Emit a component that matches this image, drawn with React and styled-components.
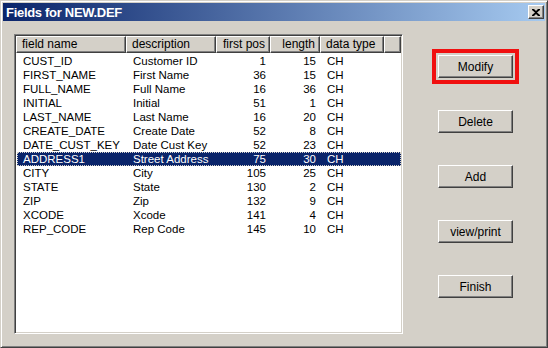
import React from 'react';
import styled, { createGlobalStyle } from 'styled-components';

const Global = createGlobalStyle`
  html, body { margin: 0; padding: 0; background: #d4d0c8; }
  body { font-family: "Liberation Sans", Arial, sans-serif; font-size: 11px; }
`;

const Window = styled.div`
  width: 548px;
  height: 348px;
  box-sizing: border-box;
  background: #d4d0c8;
  border-top: 1px solid #d4d0c8;
  border-left: 1px solid #d4d0c8;
  border-right: 1px solid #404040;
  border-bottom: 1px solid #404040;
  box-shadow: inset 1px 1px 0 #fff, inset -1px -1px 0 #808080;
  padding: 2px;
  display: flex;
  flex-direction: column;
`;

const TitleBar = styled.div`
  height: 18px;
  display: flex;
  align-items: center;
  justify-content: space-between;
  padding: 0 1px 0 3px;
  background: linear-gradient(to right, #0a246a, #a6caf0);
`;

const Title = styled.span`
  color: #fff;
  font-weight: bold;
  font-size: 13px;
  letter-spacing: -0.3px;
`;

const CloseBtn = styled.div`
  width: 16px;
  height: 14px;
  box-sizing: border-box;
  background: #d4d0c8;
  border-top: 1px solid #fff;
  border-left: 1px solid #fff;
  border-right: 1px solid #404040;
  border-bottom: 1px solid #404040;
  box-shadow: inset -1px -1px 0 #808080;
  display: flex;
  align-items: center;
  justify-content: center;
`;

const Body = styled.div`
  flex: 1;
  display: flex;
  padding: 13px 0 0 11px;
`;

const ListBox = styled.div`
  width: 389px;
  height: 300px;
  box-sizing: border-box;
  background: #fff;
  border-top: 1px solid #808080;
  border-left: 1px solid #808080;
  border-right: 1px solid #fff;
  border-bottom: 1px solid #fff;
  box-shadow: inset 1px 1px 0 #404040, inset -1px -1px 0 #d4d0c8;
  padding: 1px;
`;

const cols = '110px 90px 54px 50px 64px 1fr';

const HeaderRow = styled.div`
  display: grid;
  grid-template-columns: ${cols};
  height: 17px;
  margin-bottom: 1px;
`;

const HeadCell = styled.div`
  box-sizing: border-box;
  background: #d4d0c8;
  border-top: 1px solid #fff;
  border-left: 1px solid #fff;
  border-right: 1px solid #404040;
  border-bottom: 1px solid #404040;
  box-shadow: inset -1px -1px 0 #808080;
  padding: 0 ${p => (p.$right ? '4px' : '0')} 0 ${p => (p.$right ? '0' : '5px')};
  text-align: ${p => (p.$right ? 'right' : 'left')};
  font-size: 12px;
  line-height: 15px;
  color: #000;
  white-space: nowrap;
  overflow: hidden;
`;

const Row = styled.div`
  display: grid;
  grid-template-columns: ${cols};
  height: 14px;
  box-sizing: border-box;
  background: ${p => (p.$selected ? '#0a246a' : 'transparent')};
  color: ${p => (p.$selected ? '#fff' : '#000')};
  outline: ${p => (p.$selected ? '1px dotted #d4d0c8' : 'none')};
  outline-offset: -1px;
  margin-left: 1px;
`;

const Cell = styled.div`
  font-size: 11.5px;
  line-height: 14px;
  white-space: nowrap;
  overflow: hidden;
  text-align: ${p => (p.$right ? 'right' : 'left')};
  padding: ${p => (p.$right ? '0 5px 0 0' : '0 0 0 6px')};
`;

const Side = styled.div`
  display: flex;
  flex-direction: column;
  gap: 32px;
  padding: 21px 0 0 35px;
`;

const Button = styled.div`
  width: 75px;
  height: 23px;
  box-sizing: border-box;
  background: #d4d0c8;
  border-top: 1px solid #fff;
  border-left: 1px solid #fff;
  border-right: 1px solid #404040;
  border-bottom: 1px solid #404040;
  box-shadow: inset -1px -1px 0 #808080;
  display: flex;
  align-items: center;
  justify-content: center;
  font-size: 12px;
  color: #000;
  outline: ${p => (p.$marked ? '4px solid #f01010' : 'none')};
  outline-offset: 2px;
`;

const fields = [
  ['CUST_ID', 'Customer ID', 1, 15, 'CH'],
  ['FIRST_NAME', 'First Name', 36, 15, 'CH'],
  ['FULL_NAME', 'Full Name', 16, 36, 'CH'],
  ['INITIAL', 'Initial', 51, 1, 'CH'],
  ['LAST_NAME', 'Last Name', 16, 20, 'CH'],
  ['CREATE_DATE', 'Create Date', 52, 8, 'CH'],
  ['DATE_CUST_KEY', 'Date Cust Key', 52, 23, 'CH'],
  ['ADDRESS1', 'Street Address', 75, 30, 'CH'],
  ['CITY', 'City', 105, 25, 'CH'],
  ['STATE', 'State', 130, 2, 'CH'],
  ['ZIP', 'Zip', 132, 9, 'CH'],
  ['XCODE', 'Xcode', 141, 4, 'CH'],
  ['REP_CODE', 'Rep Code', 145, 10, 'CH'],
];

export default function App() {
  return (
    <>
      <Global />
      <Window>
        <TitleBar>
          <Title>Fields for NEW.DEF</Title>
          <CloseBtn>
            <svg width="8" height="7" viewBox="0 0 8 7">
              <path d="M0 0h2l2 2 2-2h2v1L5 3.5 8 6v1H6L4 5 2 7H0V6l3-2.5L0 1z" fill="#000" />
            </svg>
          </CloseBtn>
        </TitleBar>
        <Body>
          <ListBox>
            <HeaderRow>
              <HeadCell>field name</HeadCell>
              <HeadCell>description</HeadCell>
              <HeadCell $right>first pos</HeadCell>
              <HeadCell $right>length</HeadCell>
              <HeadCell>data type</HeadCell>
              <HeadCell />
            </HeaderRow>
            {fields.map(f => (
              <Row key={f[0]} $selected={f[0] === 'ADDRESS1'}>
                <Cell>{f[0]}</Cell>
                <Cell>{f[1]}</Cell>
                <Cell $right>{f[2]}</Cell>
                <Cell $right>{f[3]}</Cell>
                <Cell>{f[4]}</Cell>
                <Cell />
              </Row>
            ))}
          </ListBox>
          <Side>
            <Button $marked>Modify</Button>
            <Button>Delete</Button>
            <Button>Add</Button>
            <Button>view/print</Button>
            <Button>Finish</Button>
          </Side>
        </Body>
      </Window>
    </>
  );
}
